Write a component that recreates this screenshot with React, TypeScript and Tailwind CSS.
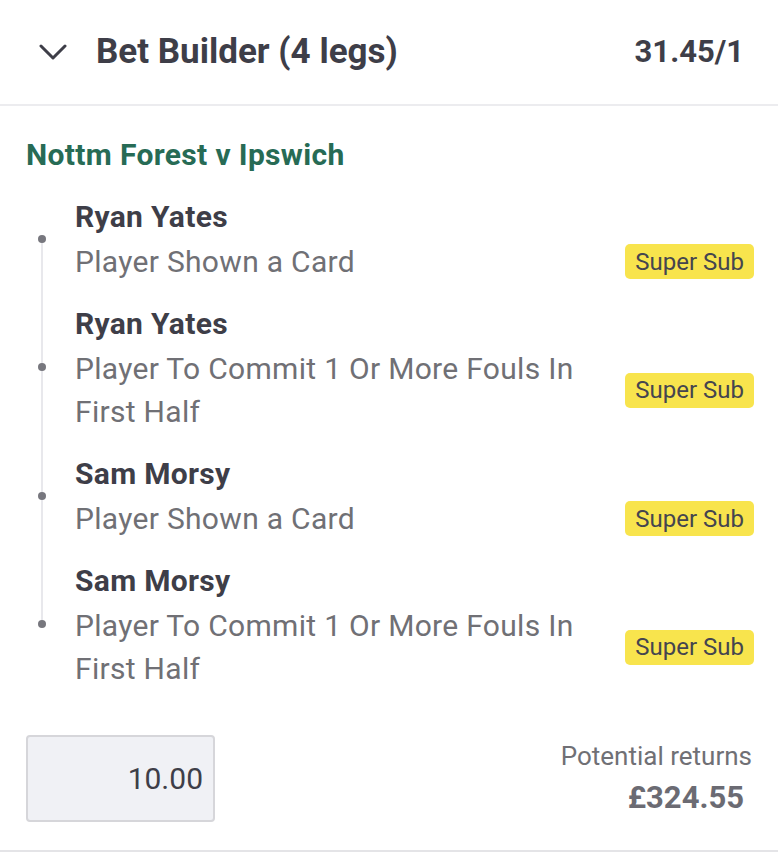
import React from 'react';

const legs = [
  { player: 'Ryan Yates', market: ['Player Shown a Card'] },
  { player: 'Ryan Yates', market: ['Player To Commit 1 Or More Fouls In', 'First Half'] },
  { player: 'Sam Morsy', market: ['Player Shown a Card'] },
  { player: 'Sam Morsy', market: ['Player To Commit 1 Or More Fouls In', 'First Half'] },
];

function Chevron() {
  return (
    <svg width="28" height="18" viewBox="0 0 28 18" fill="none">
      <path d="M2 3l12 12L26 3" stroke="#3e3e48" strokeWidth="3" strokeLinecap="round" strokeLinejoin="round" />
    </svg>
  );
}

export default function App() {
  return (
    <div className="w-[778px] h-[852px] bg-white font-['Roboto',sans-serif] text-[#3e3e48] border-b-2 border-[#e4e4e7]">
      <div className="h-[106px] flex items-center pl-[39px] pr-[34px] border-b-2 border-[#ececef]">
        <Chevron />
        <span className="ml-[29px] text-[35px] font-bold">Bet Builder (4 legs)</span>
        <span className="ml-auto text-[31px] font-bold">31.45/1</span>
      </div>

      <div className="px-[26px] pt-[30px]">
        <div className="text-[30px] font-bold text-[#276b55] leading-[38px] tracking-[0.35px]">Nottm Forest v Ipswich</div>

        <div className="relative mt-[20px] flex flex-col gap-[18px]">
          <div className="absolute left-[15px] top-[45px] bottom-[67px] w-[2px] bg-[#e8e8ec]" />
          {legs.map((leg, i) => (
            <div key={i} className="relative flex items-center">
              <div className="absolute left-[12px] w-[8px] h-[8px] rounded-full bg-[#77777e]" />
              <div className="pl-[49px] flex-1">
                <div className="text-[30px] font-bold leading-[46px] tracking-[0.3px]">{leg.player}</div>
                <div className="flex items-center">
                  <div className="flex-1 text-[30px] text-[#707075] leading-[43px] tracking-[0.3px]">
                    {leg.market.map((m, j) => (
                      <div key={j}>{m}</div>
                    ))}
                  </div>
                  <span className="-mr-[2px] bg-[#f8e44d] rounded-[5px] px-[10px] h-[35px] flex items-center text-[24px] text-[#45454f]">
                    Super Sub
                  </span>
                </div>
              </div>
            </div>
          ))}
        </div>

        <div className="mt-[45px] flex items-center justify-between">
          <div className="w-[189px] h-[87px] bg-[#f0f1f5] border-2 border-[#d6d6da] rounded-[4px] flex items-center justify-end pr-[10px] text-[30px] text-[#3e3e48]">
            10.00
          </div>
          <div className="flex flex-col items-end">
            <div className="text-[26px] text-[#707075] leading-[38px]">Potential returns</div>
            <div className="text-[31px] font-bold text-[#6b6b73] leading-[46px] pr-[8px]">£324.55</div>
          </div>
        </div>
      </div>
    </div>
  );
}
